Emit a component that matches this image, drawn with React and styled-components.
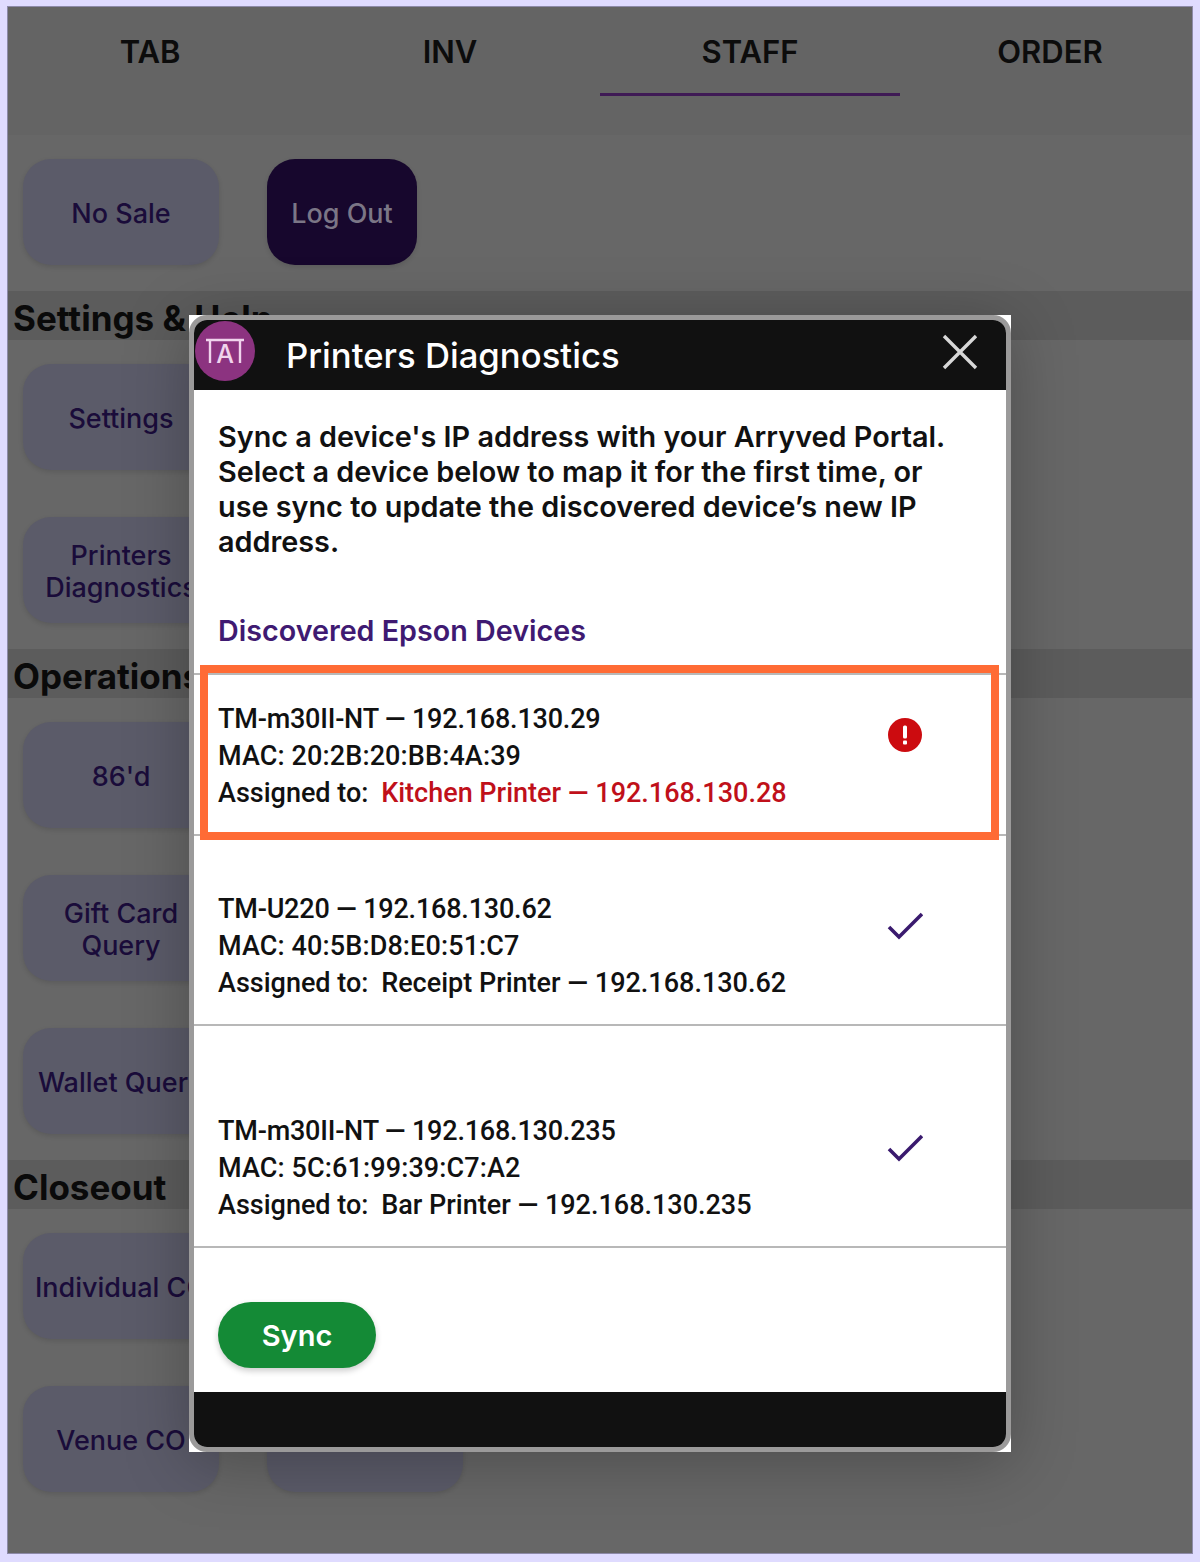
import React from "react";
import styled, { createGlobalStyle } from "styled-components";

const GlobalStyle = createGlobalStyle`
  html, body {
    margin: 0;
    padding: 0;
    background: #676767;
  }
  * {
    box-sizing: border-box;
  }
  body {
    font-family: Inter, "Noto Sans", sans-serif;
  }
`;

const Page = styled.div`
  position: relative;
  width: 1200px;
  height: 1562px;
  overflow: hidden;
  background: #676767;
`;

const Frame = styled.div`
  position: absolute;
  inset: 0;
  z-index: 5;
  pointer-events: none;
  border-style: solid;
  border-color: #dfdbff;
  border-width: 6px 7px 8px 7px;
  box-shadow: inset 0 0 0 1px #8d8aa8;
`;

const TabBar = styled.div`
  display: grid;
  grid-template-columns: repeat(4, 300px);
  height: 135px;
  background: #646464;
`;

const Tab = styled.div`
  height: 96px;
  padding-top: 34px;
  text-align: center;
  font-size: 31px;
  line-height: 36px;
  font-weight: 600;
  color: #0c0c0c;
  border-bottom: 3px solid ${(p) => (p.$active ? "#3f1a55" : "transparent")};
`;

const ButtonGrid = styled.div`
  display: grid;
  grid-template-columns: repeat(auto-fill, 196px);
  gap: 47.5px 48px;
  padding: 24px 23px 26.5px;
`;

const ActionButton = styled.div`
  display: flex;
  align-items: center;
  justify-content: center;
  width: ${(p) => (p.$width ? p.$width + "px" : "196px")};
  height: 105.5px;
  padding-top: 4px;
  border-radius: 28px;
  text-align: center;
  white-space: ${(p) => (p.$nowrap ? "nowrap" : "normal")};
  font-size: 27px;
  line-height: 32px;
  font-weight: 500;
  color: ${(p) => (p.$dark ? "#7b7686" : "#1a0c3a")};
  background: ${(p) => (p.$dark ? "#17072d" : "#5b5b69")};
  box-shadow: 0 2px 5px rgba(0, 0, 0, 0.12);
  ${(p) => (p.$newRow ? "grid-column: 1;" : "")}
`;

const SectionBand = styled.div`
  height: 49px;
  padding-left: 13px;
  background: #5c5c5c;
  font-size: 35px;
  line-height: 54px;
  font-weight: 700;
  color: #0a0a0a;
  overflow: hidden;
`;

const Modal = styled.div`
  position: absolute;
  left: 189px;
  top: 315px;
  width: 822px;
  height: 1137px;
  background: #fff;
  box-shadow: 0 10px 60px rgba(0, 0, 0, 0.26);
`;

const ModalInner = styled.div`
  display: flex;
  flex-direction: column;
  height: 100%;
  border: 5px solid #9b9a9a;
  border-radius: 18px;
  background: #fff;
  overflow: hidden;
`;

const ModalHeader = styled.div`
  display: flex;
  align-items: center;
  flex: 0 0 70px;
  padding: 0 28px 0 1px;
  background: #111;
`;

const Logo = styled.svg`
  width: 60px;
  height: 60px;
  margin-top: -8px;
  flex: none;
`;

const ModalTitle = styled.div`
  flex: 1;
  margin-left: 31px;
  font-size: 34.7px;
  font-weight: 500;
  color: #fff;
`;

const CloseIcon = styled.svg`
  width: 36px;
  height: 36px;
  margin-top: -6px;
  flex: none;
`;

const ModalBody = styled.div`
  flex: 1;
  padding-top: 29px;
  background: #fff;
`;

const Intro = styled.p`
  margin: 0;
  padding: 0 24px;
  font-size: 28.8px;
  line-height: 35px;
  font-weight: 600;
  color: #111;
  white-space: nowrap;
`;

const SubHeading = styled.h3`
  margin: 54px 0 25px;
  padding: 0 24px;
  font-size: 28.7px;
  line-height: 35px;
  font-weight: 600;
  color: #3f1a72;
`;

const DeviceRow = styled.div`
  position: relative;
  display: flex;
  align-items: center;
  justify-content: space-between;
  padding: ${(p) => p.$top}px 83px 22px 24px;
  border-bottom: 2px solid #b8b8b8;
  ${(p) => (p.$first ? "border-top: 2px solid #b8b8b8;" : "")}
`;

const DeviceText = styled.div`
  font-family: Roboto, "Liberation Sans", sans-serif;
  font-size: 27px;
  line-height: 37px;
  font-weight: 500;
  color: #111;
`;

const DeviceLine = styled.div`
  letter-spacing: ${(p) => p.$spacing || 0}px;
`;

const Assigned = styled.span`
  margin-left: 6px;
  color: ${(p) => (p.$error ? "#c0101a" : "#111")};
`;

const StatusIcon = styled.svg`
  width: 36px;
  height: 36px;
  margin-bottom: 44px;
  flex: none;
`;

// orange callout drawn on top of the first row
const Highlight = styled.div`
  position: absolute;
  left: 6px;
  top: -10px;
  width: 799px;
  height: 175px;
  border: 8px solid #ff6b35;
  pointer-events: none;
`;

const Actions = styled.div`
  padding: 54px 24px 24px;
`;

const SyncButton = styled.button`
  display: block;
  width: 158px;
  height: 66px;
  border: none;
  border-radius: 33px;
  background: #148a36;
  color: #fff;
  font-family: Inter, sans-serif;
  font-size: 29px;
  font-weight: 600;
  box-shadow: 0 3px 6px rgba(0, 0, 0, 0.2);
`;

const ModalFooter = styled.div`
  flex: 0 0 55px;
  background: #111;
`;

const devices = [
  {
    model: "TM-m30II-NT — 192.168.130.29",
    mac: "MAC: 20:2B:20:BB:4A:39",
    assigned: "Kitchen Printer — 192.168.130.28",
    error: true,
    top: 26,
  },
  {
    model: "TM-U220 — 192.168.130.62",
    mac: "MAC: 40:5B:D8:E0:51:C7",
    assigned: "Receipt Printer — 192.168.130.62",
    top: 55,
  },
  {
    model: "TM-m30II-NT — 192.168.130.235",
    mac: "MAC: 5C:61:99:39:C7:A2",
    assigned: "Bar Printer — 192.168.130.235",
    top: 87,
  },
];

function AlertIcon() {
  return (
    <StatusIcon viewBox="0 0 36 36">
      <circle cx="18" cy="18" r="17" fill="#cc0b0f" />
      <rect x="16" y="8.5" width="4" height="13" rx="1.5" fill="#fff" />
      <rect x="16" y="23.5" width="4" height="4" rx="1" fill="#fff" />
    </StatusIcon>
  );
}

function CheckIcon() {
  return (
    <StatusIcon viewBox="0 0 36 36">
      <polyline points="2,20 12,30 35,7" fill="none" stroke="#3a1a6e" strokeWidth="3.6" />
    </StatusIcon>
  );
}

export default function App() {
  return (
    <Page>
      <GlobalStyle />
      <TabBar>
        <Tab>TAB</Tab>
        <Tab>INV</Tab>
        <Tab $active>STAFF</Tab>
        <Tab>ORDER</Tab>
      </TabBar>

      <ButtonGrid>
        <ActionButton>No Sale</ActionButton>
        <ActionButton $dark $width={150}>Log Out</ActionButton>
      </ButtonGrid>

      <SectionBand>Settings &amp; Help</SectionBand>
      <ButtonGrid>
        <ActionButton>Settings</ActionButton>
        <ActionButton $newRow>Printers Diagnostics</ActionButton>
      </ButtonGrid>

      <SectionBand>Operations</SectionBand>
      <ButtonGrid>
        <ActionButton>86'd</ActionButton>
        <ActionButton $newRow>Gift Card Query</ActionButton>
        <ActionButton $newRow $nowrap>Wallet Query</ActionButton>
      </ButtonGrid>

      <SectionBand>Closeout</SectionBand>
      <ButtonGrid>
        <ActionButton $nowrap>Individual CO</ActionButton>
        <ActionButton $newRow>Venue CO</ActionButton>
        <ActionButton />
      </ButtonGrid>

      <Modal>
        <ModalInner>
          <ModalHeader>
            <Logo viewBox="0 0 60 60">
              <circle cx="30" cy="30" r="30" fill="#8c3380" />
              <path d="M11 19 H49 M15 19 V42 M45 19 V42" stroke="#f0d3ec" strokeWidth="2.4" fill="none" />
              <text x="30" y="42" textAnchor="middle" fontFamily="Inter, sans-serif" fontSize="25" fontWeight="500" fill="#f0d3ec">A</text>
            </Logo>
            <ModalTitle>Printers Diagnostics</ModalTitle>
            <CloseIcon viewBox="0 0 36 36">
              <path d="M2 2 L34 34 M34 2 L2 34" stroke="#d8d8d8" strokeWidth="3.4" />
            </CloseIcon>
          </ModalHeader>

          <ModalBody>
            <Intro>
              Sync a device's IP address with your Arryved Portal.<br />
              Select a device below to map it for the first time, or<br />
              use sync to update the discovered device’s new IP<br />
              address.
            </Intro>
            <SubHeading>Discovered Epson Devices</SubHeading>

            {devices.map((d, i) => (
              <DeviceRow key={d.mac} $top={d.top} $first={i === 0}>
                <DeviceText>
                  <DeviceLine $spacing={-0.2}>{d.model}</DeviceLine>
                  <DeviceLine $spacing={0.12}>{d.mac}</DeviceLine>
                  <DeviceLine>
                    Assigned to: <Assigned $error={d.error}>{d.assigned}</Assigned>
                  </DeviceLine>
                </DeviceText>
                {d.error ? <AlertIcon /> : <CheckIcon />}
                {d.error && <Highlight />}
              </DeviceRow>
            ))}

            <Actions>
              <SyncButton>Sync</SyncButton>
            </Actions>
          </ModalBody>
          <ModalFooter />
        </ModalInner>
      </Modal>
      <Frame />
    </Page>
  );
}
